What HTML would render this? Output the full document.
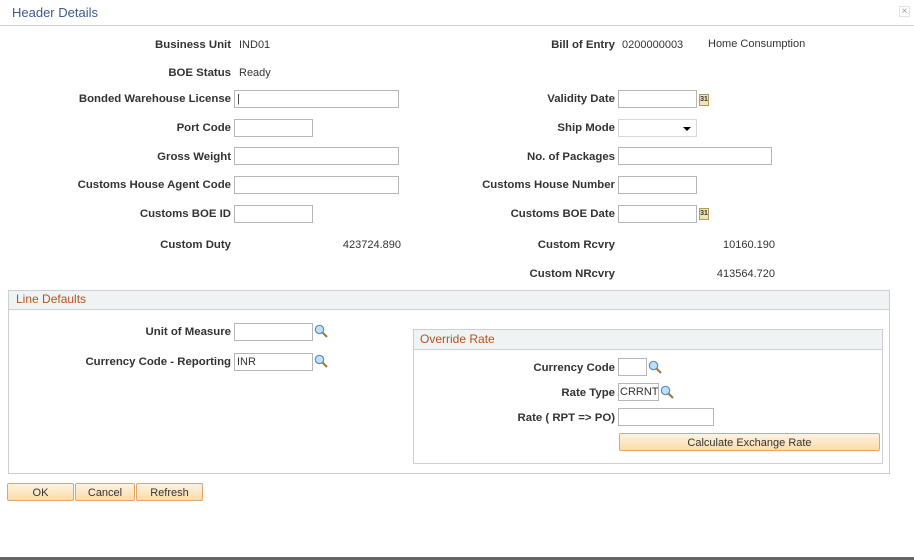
<!DOCTYPE html>
<html><head><meta charset="utf-8"><style>
*{box-sizing:border-box;margin:0;padding:0}
body{width:914px;height:560px;position:relative;background:#fff;font-family:"Liberation Sans",Arial,sans-serif;font-size:11px;color:#333;overflow:hidden}
.a{position:absolute;white-space:nowrap}
.l{position:absolute;font-weight:bold;text-align:right;white-space:nowrap;line-height:14px;font-size:11.4px;margin-top:1px}
.v{position:absolute;white-space:nowrap;line-height:14px;margin-top:1px}
.i{position:absolute;border:1px solid #b6b6b6;background:#fff;height:18px;font-size:11px;line-height:16px;padding-left:2px}
.btn{position:absolute;height:18px;border:1px solid #e5a56a;border-radius:2px;background:linear-gradient(#fff3df,#fbdcaa);text-align:center;line-height:18px;font-size:11px;color:#333}
.cal{position:absolute;width:10px;height:12px;background:#efe4b8;border:1px solid #b39c5a;font-size:7px;line-height:10px;text-align:center;font-weight:bold;color:#333}
.mag{position:absolute;width:14px;height:14px}
</style></head><body>
<div class="a" style="left:12px;top:4px;font-size:13px;color:#3f5b8b;line-height:18px">Header Details</div>
<div class="a" style="left:0;top:25px;width:914px;height:1px;background:#cfcfcf"></div>
<div class="a" style="left:899px;top:6px;width:11px;height:11px;border:1px solid #e2e2e2;color:#999;font-size:10px;line-height:9px;text-align:center">×</div>

<div class="l" style="right:683px;top:37px">Business Unit</div><div class="v" style="left:239px;top:37px">IND01</div>
<div class="l" style="right:683px;top:65px">BOE Status</div><div class="v" style="left:239px;top:65px">Ready</div>
<div class="l" style="right:683px;top:91px">Bonded Warehouse License</div><div class="i" style="left:234px;top:90px;width:165px">|</div>
<div class="l" style="right:683px;top:120px">Port Code</div><div class="i" style="left:234px;top:119px;width:79px"></div>
<div class="l" style="right:683px;top:149px">Gross Weight</div><div class="i" style="left:234px;top:147px;width:165px"></div>
<div class="l" style="right:683px;top:177px">Customs House Agent Code</div><div class="i" style="left:234px;top:176px;width:165px"></div>
<div class="l" style="right:683px;top:206px">Customs BOE ID</div><div class="i" style="left:234px;top:205px;width:79px"></div>
<div class="l" style="right:683px;top:237px">Custom Duty</div><div class="v" style="right:513px;top:237px">423724.890</div>

<div class="l" style="right:299px;top:37px">Bill of Entry</div><div class="v" style="left:622px;top:37px">0200000003</div><div class="v" style="left:708px;top:36px">Home Consumption</div>
<div class="l" style="right:299px;top:91px">Validity Date</div><div class="i" style="left:618px;top:90px;width:79px"></div><div class="cal" style="left:699px;top:94px">31</div>
<div class="l" style="right:299px;top:120px">Ship Mode</div><div class="i" style="left:618px;top:119px;width:79px;border-color:#d8d8e0"><span style="position:absolute;right:5px;top:7px;border-left:4px solid transparent;border-right:4px solid transparent;border-top:4px solid #000"></span></div>
<div class="l" style="right:299px;top:149px">No. of Packages</div><div class="i" style="left:618px;top:147px;width:154px"></div>
<div class="l" style="right:299px;top:177px">Customs House Number</div><div class="i" style="left:618px;top:176px;width:79px"></div>
<div class="l" style="right:299px;top:206px">Customs BOE Date</div><div class="i" style="left:618px;top:205px;width:79px"></div><div class="cal" style="left:699px;top:208px">31</div>
<div class="l" style="right:299px;top:237px">Custom Rcvry</div><div class="v" style="right:139px;top:237px">10160.190</div>
<div class="l" style="right:299px;top:266px">Custom NRcvry</div><div class="v" style="right:139px;top:266px">413564.720</div>

<div class="a" style="left:8px;top:290px;width:882px;height:184px;border:1px solid #cdcdd3"></div>
<div class="a" style="left:8px;top:290px;width:882px;height:20px;background:#f0f3f3;border:1px solid #cdcdd3;color:#b5521e;font-size:12px;line-height:17px;padding-left:7px">Line Defaults</div>
<div class="l" style="right:683px;top:324px">Unit of Measure</div><div class="i" style="left:234px;top:323px;width:79px"></div>
<svg class="mag" style="left:314px;top:324px" viewBox="0 0 14 14"><circle cx="5.5" cy="5.5" r="4.2" fill="#bfe0f8" stroke="#5a8fc0" stroke-width="1.2"/><line x1="8.5" y1="8.5" x2="13" y2="13" stroke="#a07a40" stroke-width="2.2"/></svg>
<div class="l" style="right:683px;top:354px">Currency Code - Reporting</div><div class="i" style="left:234px;top:353px;width:79px">INR</div>
<svg class="mag" style="left:314px;top:354px" viewBox="0 0 14 14"><circle cx="5.5" cy="5.5" r="4.2" fill="#bfe0f8" stroke="#5a8fc0" stroke-width="1.2"/><line x1="8.5" y1="8.5" x2="13" y2="13" stroke="#a07a40" stroke-width="2.2"/></svg>

<div class="a" style="left:413px;top:329px;width:470px;height:135px;border:1px solid #cdcdd3"></div>
<div class="a" style="left:413px;top:329px;width:470px;height:21px;background:#f0f3f3;border:1px solid #cdcdd3;color:#b5521e;font-size:12px;line-height:18px;padding-left:6px">Override Rate</div>
<div class="l" style="right:299px;top:360px">Currency Code</div><div class="i" style="left:618px;top:358px;width:29px"></div>
<svg class="mag" style="left:648px;top:360px" viewBox="0 0 14 14"><circle cx="5.5" cy="5.5" r="4.2" fill="#bfe0f8" stroke="#5a8fc0" stroke-width="1.2"/><line x1="8.5" y1="8.5" x2="13" y2="13" stroke="#a07a40" stroke-width="2.2"/></svg>
<div class="l" style="right:299px;top:385px">Rate Type</div><div class="i" style="left:618px;top:383px;width:41px;padding-left:1px">CRRNT</div>
<svg class="mag" style="left:660px;top:385px" viewBox="0 0 14 14"><circle cx="5.5" cy="5.5" r="4.2" fill="#bfe0f8" stroke="#5a8fc0" stroke-width="1.2"/><line x1="8.5" y1="8.5" x2="13" y2="13" stroke="#a07a40" stroke-width="2.2"/></svg>
<div class="l" style="right:299px;top:410px">Rate ( RPT =&gt; PO)</div><div class="i" style="left:618px;top:408px;width:96px"></div>
<div class="btn" style="left:619px;top:433px;width:261px">Calculate Exchange Rate</div>

<div class="btn" style="left:7px;top:483px;width:67px">OK</div>
<div class="btn" style="left:75px;top:483px;width:60px">Cancel</div>
<div class="btn" style="left:136px;top:483px;width:67px">Refresh</div>

<div class="a" style="left:0;top:557px;width:914px;height:3px;background:#666"></div>
</body></html>
